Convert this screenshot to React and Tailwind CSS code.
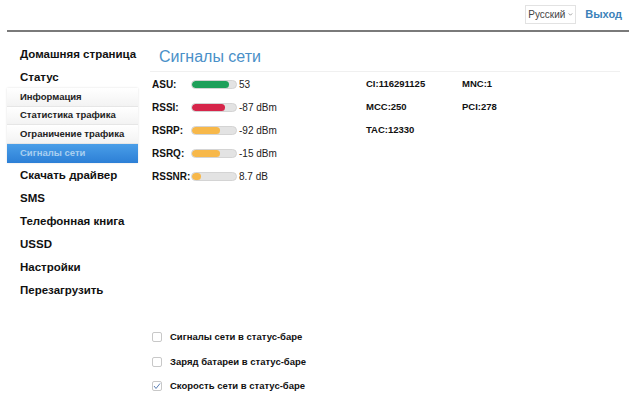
import React from 'react';

const signals = [
  { label: 'ASU:', value: '53', pct: 84, color: 'bg-[#1ea05a]' },
  { label: 'RSSI:', value: '-87 dBm', pct: 76, color: 'bg-[#d6254a]' },
  { label: 'RSRP:', value: '-92 dBm', pct: 63, color: 'bg-[#f7b84a]' },
  { label: 'RSRQ:', value: '-15 dBm', pct: 63, color: 'bg-[#f7b84a]' },
  { label: 'RSSNR:', value: '8.7 dB', pct: 20, color: 'bg-[#f7b84a]' },
];

const subMenu = ['Информация', 'Статистика трафика', 'Ограничение трафика'];
const bottomMenu = ['Скачать драйвер', 'SMS', 'Телефонная книга', 'USSD', 'Настройки', 'Перезагрузить'];
const toggles = [
  { label: 'Сигналы сети в статус-баре', checked: false },
  { label: 'Заряд батареи в статус-баре', checked: false },
  { label: 'Скорость сети в статус-баре', checked: true },
];

const App = () => {
  return (
    <div className="w-[629px] h-[407px] bg-white overflow-hidden font-['Liberation_Sans',Arial,sans-serif] text-[#111]">
      {/* header */}
      <div className="flex items-center justify-end h-[32px] pr-[7px] ml-[7px] border-b-[2px] border-[#7a7a7a]">
        <div className="flex items-center h-[19px] w-[51px] border border-[#e2e2e2] bg-white px-[2px] text-[10px] text-[#444] mb-[2px]">
          <span>Русский</span>
          <svg className="ml-[3px]" width="7" height="5" viewBox="0 0 7 5">
            <path d="M1 1 L3.5 3.5 L6 1" fill="none" stroke="#777" strokeWidth="1" />
          </svg>
        </div>
        <span className="ml-[9px] text-[11px] font-bold text-[#3c82b9] mb-[2px]">Выход</span>
      </div>

      <div className="flex">
        {/* sidebar */}
        <div className="w-[131px] ml-[7px] pt-[14px]">
          <div className="pl-[13px] h-[23px] text-[11.5px] font-bold leading-[16px]">Домашняя страница</div>
          <div className="pl-[13px] h-[19px] text-[11.5px] font-bold leading-[16px]">Статус</div>
          <div className="shadow-[0_0_2px_rgba(0,0,0,0.12)]">
            {subMenu.map((item) => (
              <div
                key={item}
                className="h-[18.5px] pl-[13px] flex items-center text-[9.5px] font-bold text-[#222] bg-gradient-to-b from-white to-[#f3f3f3] border-b border-[#e6e6e6]"
              >
                {item}
              </div>
            ))}
            <div className="h-[19px] pl-[13px] flex items-center text-[9.5px] font-bold text-[#a9cff0] bg-gradient-to-b from-[#4a9ee8] to-[#2c7fd6]">
              Сигналы сети
            </div>
          </div>
          <div className="pt-[4px]">
            {bottomMenu.map((item) => (
              <div key={item} className="pl-[13px] h-[23px] text-[11.5px] font-bold leading-[16px]">
                {item}
              </div>
            ))}
          </div>
        </div>

        {/* content */}
        <div className="flex-1 ml-[12px] mr-[9px] pt-[15px]">
          <div className="pl-[9px] pb-[4px] text-[16px] text-[#4a90c8] border-b border-[#f0f0f0] leading-[20px]">
            Сигналы сети
          </div>
          <div className="flex pt-[1px]">
            <div className="w-[215px] pl-[2px]">
              {signals.map((s) => (
                <div key={s.label} className="flex items-center h-[23px] text-[10px]">
                  <span className="w-[39px] font-bold">{s.label}</span>
                  <div className="w-[46px] h-[9px] rounded-full bg-[#e3e3e3] border border-[#d4d4d4] overflow-hidden">
                    <div className={`h-full rounded-full ${s.color}`} style={{ width: `${s.pct}%` }} />
                  </div>
                  <span className="ml-[2px] text-[#222]">{s.value}</span>
                </div>
              ))}
            </div>
            <div className="grid grid-cols-[96px_96px] auto-rows-[23px] text-[9.5px] font-bold pl-[1px]">
              <div className="flex items-center">CI:116291125</div>
              <div className="flex items-center">MNC:1</div>
              <div className="flex items-center">MCC:250</div>
              <div className="flex items-center">PCI:278</div>
              <div className="flex items-center">TAC:12330</div>
            </div>
          </div>

          <div className="pt-[137px] pl-[2px]">
            {toggles.map((t) => (
              <div key={t.label} className="flex items-center h-[24.5px] text-[9.5px] font-bold">
                <div className="w-[10px] h-[10px] border border-[#c8c8c8] rounded-[2px] bg-white flex items-center justify-center mr-[8px]">
                  {t.checked && (
                    <svg width="8" height="8" viewBox="0 0 8 8">
                      <path d="M1 4 L3 6.5 L7 1.5" fill="none" stroke="#5b7fb5" strokeWidth="1" />
                    </svg>
                  )}
                </div>
                <span>{t.label}</span>
              </div>
            ))}
          </div>
        </div>
      </div>
    </div>
  );
};

export default App;
